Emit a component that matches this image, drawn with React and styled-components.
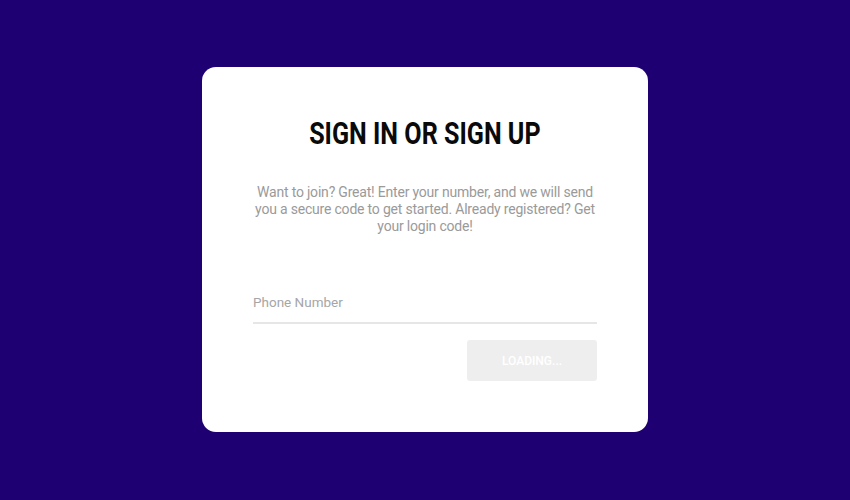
import React from "react";
import styled, { createGlobalStyle } from "styled-components";

const Global = createGlobalStyle`
  html, body { margin: 0; padding: 0; }
  body { background: #1e0073; font-family: "Roboto", "Liberation Sans", sans-serif; }
`;

const Page = styled.div`
  width: 850px;
  height: 500px;
  display: flex;
  justify-content: center;
  align-items: flex-start;
  padding-top: 67px;
  box-sizing: border-box;
`;

const Card = styled.div`
  width: 446px;
  height: 365px;
  box-sizing: border-box;
  background: #ffffff;
  border-radius: 14px;
  padding: 49px 51px 0;
  display: flex;
  flex-direction: column;
  align-items: center;
`;

const Title = styled.h1`
  margin: 0;
  font-family: "Roboto", "Liberation Sans", sans-serif;
  font-weight: 700;
  font-size: 31px;
  line-height: 36px;
  color: #0a0a0a;
  transform: scaleX(0.81);
  white-space: nowrap;
`;

const Text = styled.p`
  margin: 32px 0 0;
  width: 352px;
  text-align: center;
  font-size: 14px;
  line-height: 17px;
  letter-spacing: -0.2px;
  color: #9a9a9a;
`;

const Field = styled.div`
  margin-top: 57px;
  width: 344px;
  border-bottom: 2px solid #e6e6e6;
  padding-bottom: 10px;
  display: flex;
  align-items: center;
`;

const Input = styled.input`
  border: none;
  outline: none;
  padding: 0;
  width: 100%;
  font-family: "Roboto", "Liberation Sans", sans-serif;
  font-size: 13.5px;
  line-height: 20px;
  color: #333;
  caret-color: #000;
  &::placeholder { color: #a6a6a6; }
`;

const Actions = styled.div`
  width: 344px;
  display: flex;
  justify-content: flex-end;
  margin-top: 16px;
`;

const Button = styled.button`
  width: 130px;
  height: 41px;
  border: none;
  border-radius: 3px;
  background: #eeeeee;
  color: #ffffff;
  font-family: "Roboto", "Liberation Sans", sans-serif;
  font-weight: 500;
  font-size: 12px;
`;

export default function App() {
  return (
    <>
      <Global />
      <Page>
        <Card>
          <Title>SIGN IN OR SIGN UP</Title>
          <Text>
            Want to join? Great! Enter your number, and we will send you a
            secure code to get started. Already registered? Get your login
            code!
          </Text>
          <Field>
            <Input placeholder="Phone Number" autoFocus />
          </Field>
          <Actions>
            <Button disabled>LOADING...</Button>
          </Actions>
        </Card>
      </Page>
    </>
  );
}
